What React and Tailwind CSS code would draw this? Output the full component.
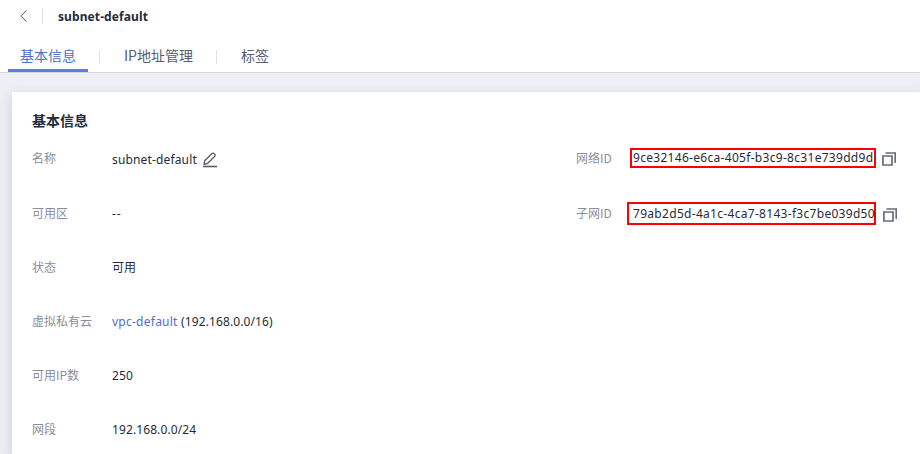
const rows = [
  { label: '可用区', value: '--', spacing: 'tracking-[1px]' },
  { label: '状态', value: '可用', spacing: 'tracking-normal' },
  { label: '虚拟私有云', link: 'vpc-default', value: '(192.168.0.0/16)', spacing: 'tracking-[0.1px]' },
  { label: '可用IP数', value: '250', spacing: 'tracking-[0.1px]' },
  { label: '网段', value: '192.168.0.0/24', spacing: 'tracking-[0.1px]' },
];

function EditIcon() {
  return (
    <svg className="ml-[5px] h-4 w-4 shrink-0" viewBox="0 0 16 16" fill="none" stroke="#575d6c">
      <path d="M2 12.3 2.7 8.8 10 1.5q1.1-.8 2.2.2l.5.5q.9 1 .1 2L5.5 11.5Z" strokeWidth="1.3" strokeLinejoin="round" />
      <path d="M1 14.5H15" strokeWidth="1.6" />
    </svg>
  );
}

function CopyIcon() {
  return (
    <svg className="h-[14px] w-[14px] shrink-0" viewBox="0 0 14 14" fill="none" stroke="#666b78">
      <path d="M.9 4H10V13H.9Z" strokeWidth="1.7" />
      <path d="M3.5 1H13.2V11" strokeWidth="1.6" />
    </svg>
  );
}

function Label({ children }) {
  return <span className="w-20 shrink-0 pb-0.5 font-['Noto_Sans_CJK_SC',sans-serif] text-[#8a8e99]">{children}</span>;
}

export default function App() {
  return (
    <div className="flex h-[454px] w-[920px] flex-col overflow-hidden bg-[#eeeff5] font-['Noto_Sans','Noto_Sans_CJK_SC',sans-serif] text-xs text-[#252b3a]">
      <header className="h-[73px] shrink-0 border-b border-[#d5d6dc] bg-white">
        <div className="flex h-8 items-center pl-5">
          <svg className="h-3 w-[7px]" viewBox="0 0 7 12" fill="none" stroke="#575d6c">
            <path d="M6.5.5.8 6l5.7 5.5" />
          </svg>
          <span className="ml-[15px] h-4 w-px bg-[#dfe1e6]" />
          <h1 className="ml-[15px] pt-px text-xs font-bold tracking-[0.1px]">subnet-default</h1>
        </div>
        <nav className="flex h-10 items-center pl-2 font-['Noto_Sans_CJK_SC',sans-serif] text-sm text-[#575d6c]">
          <div className="flex h-10 w-20 flex-col items-center border-b-[3px] border-[#5e7ce0] pt-[13px] leading-5 text-[#526ecc]">基本信息</div>
          <span className="ml-[11px] mt-[10px] h-[14px] w-px bg-[#dfe1e6]" />
          <span className="ml-6 mt-1.5 w-[92px]">IP地址管理</span>
          <span className="mt-[10px] h-[14px] w-px bg-[#dfe1e6]" />
          <span className="ml-6 mt-1.5">标签</span>
        </nav>
      </header>
      <main className="ml-3 mt-[19px] flex-1 bg-white pl-5 pt-5 shadow-[0_4px_12px_rgba(37,43,58,0.16)]">
        <h2 className="h-[18px] text-sm leading-[18px] font-bold">基本信息</h2>
        <div className="flex">
          <div className="w-[544px]">
            <div className="flex h-[57px] items-center">
              <Label>名称</Label>
              <span className="mt-[3px] flex items-center">
                <span className="tracking-[0.15px]">subnet-default</span>
                <EditIcon />
              </span>
            </div>
            {rows.map((r) => (
              <div key={r.label} className="flex h-[54px] items-center">
                <Label>{r.label}</Label>
                <span className={r.spacing}>
                  {r.link && <a className="tracking-[0.25px] text-[#526ecc]">{r.link} </a>}
                  {r.value}
                </span>
              </div>
            ))}
          </div>
          <div>
            <div className="flex h-[57px] items-center">
              <span className="w-[54px] pb-0.5 font-['Noto_Sans_CJK_SC',sans-serif] text-[#8a8e99]">网络ID</span>
              <span className="mb-0.5 flex h-5 w-[246px] items-center border-2 border-[#f00] pl-px tracking-[0.3px] whitespace-nowrap">9ce32146-e6ca-405f-b3c9-8c31e739dd9d</span>
              <span className="ml-1.5 pt-px"><CopyIcon /></span>
            </div>
            <div className="flex h-[54px] items-center">
              <span className="w-[51px] pb-0.5 font-['Noto_Sans_CJK_SC',sans-serif] text-[#8a8e99]">子网ID</span>
              <span className="mb-px flex h-[23px] w-[249px] items-center border-2 border-[#f00] pt-px pl-1 tracking-[0.3px] whitespace-nowrap">79ab2d5d-4a1c-4ca7-8143-f3c7be039d50</span>
              <span className="ml-[7px] pt-px"><CopyIcon /></span>
            </div>
          </div>
        </div>
      </main>
    </div>
  );
}
